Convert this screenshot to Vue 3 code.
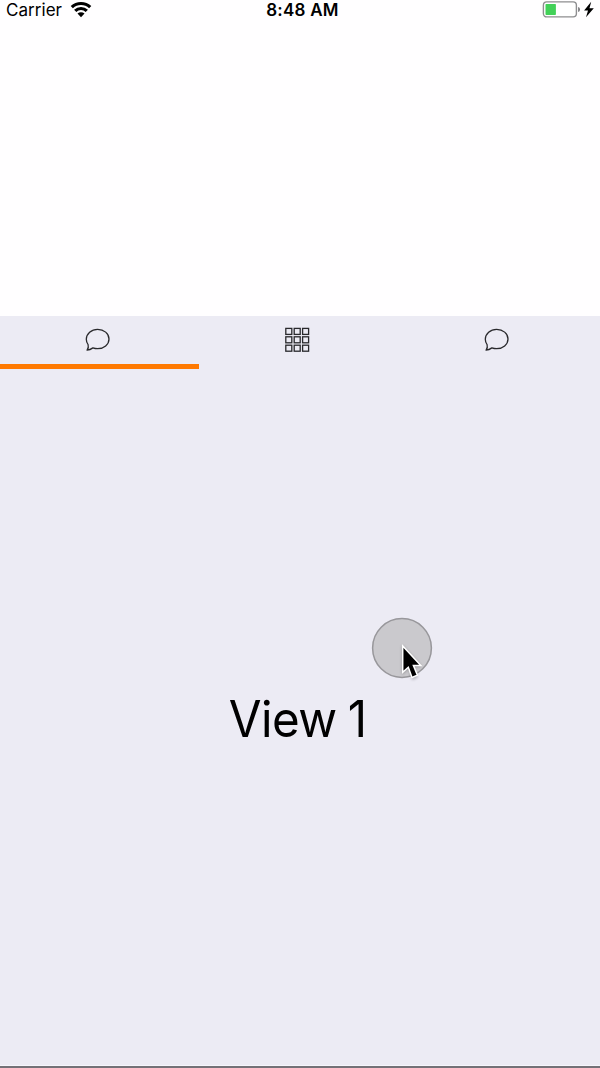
<script setup>
const tabs = ['chat', 'grid', 'chat']
const cells = [0.8, 9.2, 17.6]
</script>

<template>
  <main class="screen">
    <header class="hero">
      <div class="status">
        <div class="left">
          <span class="carrier">Carrier</span>
          <svg class="wifi" width="22" height="17" viewBox="0 0 22 17">
            <g fill="none" stroke="#000" stroke-width="3.2">
              <path d="M1.8 6.2A13.3 13.3 0 0 1 20.2 6.2" />
              <path d="M5.2 9.9A8.2 8.2 0 0 1 16.8 9.9" />
            </g>
            <path d="M7.5 12.6A5 5 0 0 1 14.5 12.6L11 16.2Z" />
          </svg>
        </div>
        <span class="time">8:48 AM</span>
        <svg class="battery" width="53" height="20" viewBox="0 0 53 20">
          <rect x="1.4" y="1.9" width="33" height="15" rx="3.3" fill="#fff" stroke="#8e8e90" stroke-width="1.4" />
          <rect x="3.5" y="4" width="10.4" height="10.9" rx="0.7" fill="#42d158" />
          <path d="M36.1 7Q38 7.4 38 9.5T36.1 12Z" fill="#77777a" />
          <path d="M49.2 1.8L42.1 10.6H46L44 17.2L51.8 8.2H47.5Z" />
        </svg>
      </div>
    </header>
    <nav class="tabs">
      <div v-for="(tab, i) in tabs" :key="i" class="tab" :class="{ active: i === 0 }">
        <svg class="icon" width="28" height="28" viewBox="0 0 28 28">
          <path
            v-if="tab === 'chat'"
            d="M3.1 24.2C4.4 22.4 4.7 20.7 4.1 18.6C2.9 17 2.3 15.3 2.3 13.3C2.3 7.6 7.4 3.3 13.6 3.3C19.9 3.3 25 7.6 25 13C25 18.5 19.9 22.7 13.6 22.7C11.8 22.7 10.3 22.4 8.9 21.9C7.2 23.1 5.3 24 3.1 24.2Z"
            fill="none" stroke="#29292c" stroke-width="1.3" stroke-linejoin="round"
          />
          <g v-else fill="none" stroke="#29292c" stroke-width="1.3" transform="translate(1 1.6)">
            <template v-for="y in cells" :key="y">
              <rect v-for="x in cells" :key="x" :x="x" :y="y" width="6" height="6" />
            </template>
          </g>
        </svg>
      </div>
    </nav>
    <section class="content">
      <h1>View 1</h1>
      <svg class="pointer" width="64" height="68" viewBox="0 0 64 68">
        <circle cx="32" cy="32" r="29.4" fill="#cac9cd" stroke="#98979b" stroke-width="1.5" />
        <path class="shadow" d="M32 29L32 59L38.2 53L42.3 64L48 61.3L43.8 51H52Z" />
        <path d="M32.7 30V56.3L38.3 51.2L42 61.4L47.4 59.1L43.4 49.4H50.8Z" stroke="#fff" stroke-width="1.5" />
      </svg>
    </section>
  </main>
</template>

<style>
body { margin: 0; background: #ecebf4; }
</style>

<style scoped>
.screen {
  position: relative;
  box-sizing: border-box;
  width: 600px;
  height: 1068px;
  display: flex;
  flex-direction: column;
  overflow: hidden;
  background: #ecebf4;
  border-bottom: 2px solid #737177;
  font-family: Inter, "Liberation Sans", sans-serif;
  color: #000;
}
.hero { height: 316px; background: #fffeff; }
.status {
  display: grid;
  grid-template-columns: 1fr auto 1fr;
  align-items: start;
  height: 20px;
  padding: 0 5px 0 6px;
  font-size: 17px;
  line-height: 21px;
}
.left { display: flex; gap: 8px; }
.carrier { letter-spacing: 0.05px; }
.wifi { margin-top: 1px; }
.time { font-weight: 600; letter-spacing: 0.25px; margin-left: 4px; }
.battery { justify-self: end; }
.tabs { display: grid; grid-template-columns: repeat(3, 200px); height: 53px; }
.tab { display: flex; align-items: flex-start; justify-content: center; box-sizing: border-box; padding: 10px 5px 0 0; position: relative; }
.tab:last-child { padding-right: 6px; }
.active::after {
  content: "";
  position: absolute;
  left: 0;
  bottom: 0;
  width: 198.5px;
  height: 5.5px;
  background: #ff7900;
}
.content { position: relative; flex: 1; display: flex; justify-content: center; align-items: center; border-bottom: 1px solid #f7f6fc; }
h1 { margin: 3px 5px 0 0; font-size: 50px; line-height: 60px; font-weight: 400; letter-spacing: -0.5px; word-spacing: -2px; transform: scaleX(0.95); }
.pointer { position: absolute; left: 370px; top: 247px; }
.shadow { fill: #000; opacity: 0.25; filter: blur(1.5px); }
</style>
